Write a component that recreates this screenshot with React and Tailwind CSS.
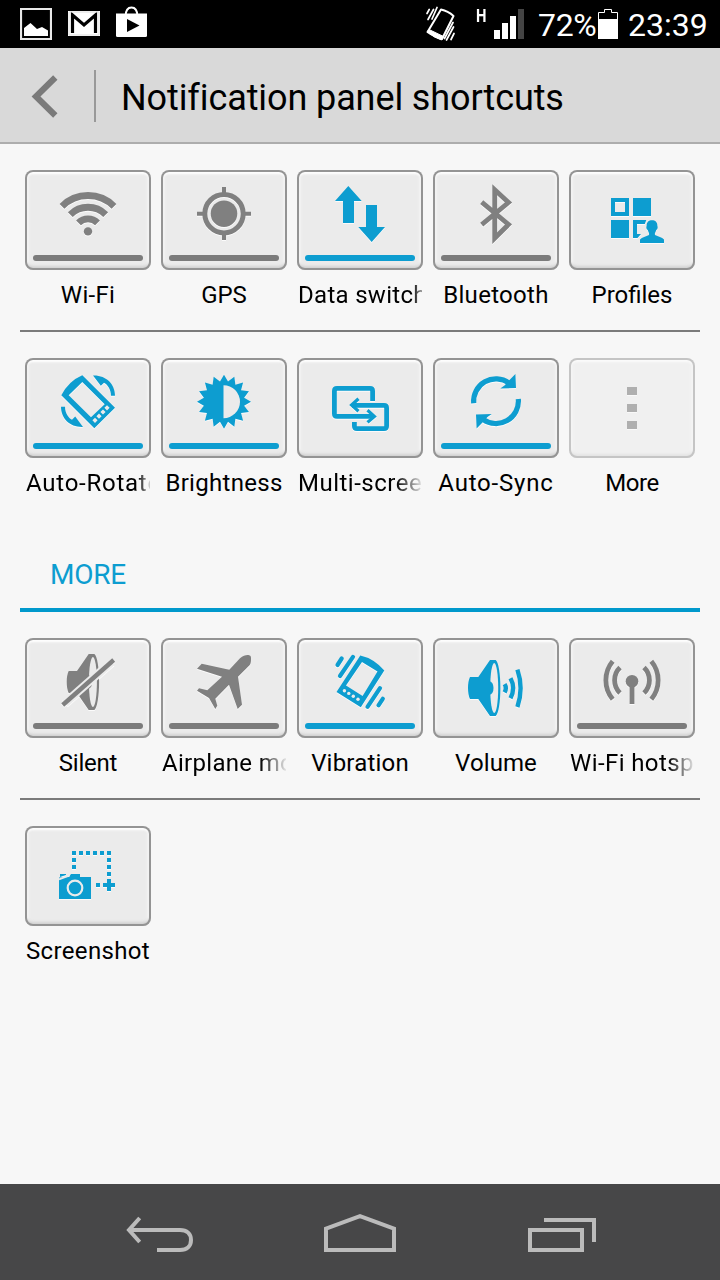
import React from 'react';
import clsx from 'clsx';

const BLUE = '#0d9dd0';
const GRAY = '#808080';
const TILE = '#ebebeb';

const sunPoints = Array.from({ length: 32 }, (_, i) => {
  const r = i % 2 === 0 ? 27 : 20.5;
  const a = (i * Math.PI) / 16;
  return `${(63 + r * Math.sin(a)).toFixed(2)},${(43.7 - r * Math.cos(a)).toFixed(2)}`;
}).join(' ');

const Speaker = () => (
  <>
    <path d="M37 39H45.3L57 22H62.7C65.5 24 67.4 36 67.4 50S65.5 76 62.7 78H57L45.3 61H37Q35 57 35 50T37 39Z" fill="currentColor" />
    <ellipse cx="61.2" cy="50" rx="4" ry="25" fill={TILE} />
    <path d="M56 43Q60.5 44 60.5 50T56 57Z" fill="currentColor" />
  </>
);

const RotateArrow = () => (
  <path d="M68 17.5C81 17 90 26 90 37.7H86C86 31 82.5 26.5 79 24.7L75.8 27.8Z" fill="currentColor" />
);

const SyncArrow = () => (
  <>
    <path d="M40.7 45.3A22.4 22.4 0 0 1 76 25" fill="none" stroke="currentColor" strokeWidth="5.2" />
    <path d="M82.4 16L83 30L67.3 30.5L71.5 27.5L77 21.5Z" fill="currentColor" />
  </>
);

const icons = {
  wifi: (
    <>
      <path
        d="M37 36.3A36.7 36.7 0 0 1 89 36.3M45.3 44.6A25 25 0 0 1 80.7 44.6M53.5 52.8A13.4 13.4 0 0 1 72.5 52.8"
        fill="none" stroke="currentColor" strokeWidth="6.8"
      />
      <circle cx="63" cy="61.4" r="4.2" fill="currentColor" />
    </>
  ),
  gps: (
    <>
      <circle cx="63" cy="43.7" r="19.2" fill="none" stroke="currentColor" strokeWidth="5" />
      <circle cx="63" cy="43.7" r="13.3" fill="currentColor" />
      <path d="M63 17V24M63 64V70M36 43.7H43M83 43.7H90" stroke="currentColor" strokeWidth="4" />
    </>
  ),
  data: (
    <path
      d="M51.3 16L64.7 31H57V53H46V31H38ZM69 35H80V57H88L74.7 72L61.3 57H69Z"
      fill="currentColor"
    />
  ),
  bluetooth: (
    <path
      d="M48.7 32.2L75.5 54.5L61.7 68.2V19.8L75.5 32.5L48.7 54.7"
      fill="none" stroke="currentColor" strokeWidth="4.8"
    />
  ),
  profiles: (
    <>
      <path d="M42 28H60V46H42ZM46 32V42H56V32Z" fill="currentColor" fillRule="evenodd" />
      <path d="M64 28H82V46H64ZM42 50H60V68H42Z" fill="currentColor" />
      <path d="M64 50H77.3L75.8 54H68V64H72L68.5 68H64Z" fill="currentColor" />
      <path
        d="M71 73V69.5C73 67.3 77 66.3 80 65C80.6 63.5 79.4 62 78.7 60C77.3 59 77 57.5 77.6 56C77.6 52 79.8 50.3 83 50.3S88.4 52 88.4 56C89 57.5 88.7 59 87.3 60C86.6 62 85.4 63.5 86 65C89 66.3 93 67.3 95 69.5V73Z"
        fill="currentColor"
      />
    </>
  ),
  rotate: (
    <>
      <path
        d="M57.3 17.3L90 49.7L69.3 70.3L36.3 37.3Q43.8 23 57.3 17.3ZM57.3 24L43.7 37.2L66 59.3L79.7 46.3Z"
        fill="currentColor" fillRule="evenodd"
      />
      <path d="M70 59.7L72.6 62.3L70 65L67.4 62.3ZM74 55.5L76.6 58.2L74 60.8L71.4 58.2ZM78 51.4L80.6 54L78 56.6L75.4 54ZM82 47.2L84.6 49.8L82 52.4L79.4 49.8Z" fill={TILE} />
      <RotateArrow />
      <g transform="rotate(180 63 43.2)"><RotateArrow /></g>
    </>
  ),
  brightness: (
    <>
      <polygon points={sunPoints} fill="currentColor" />
      <path d="M62.5 27.2A16.5 16.5 0 0 1 62.5 60.2Z" fill={TILE} />
    </>
  ),
  multiscreen: (
    <>
      <path
        d="M75.6 43V33Q75.6 30.4 73 30.4H40Q37.4 30.4 37.4 33V55.8Q37.4 58.4 40 58.4H77M55 47.3H87Q89.6 47.3 89.6 50V68Q89.6 70.6 87 70.6H60Q57.4 70.6 57.4 68V64"
        fill="none" stroke="currentColor" strokeWidth="4.8"
      />
      <path d="M61.5 40.8L54.6 47.1L61.5 53.2M70.5 52.2L77.4 58.4L70.5 64.4" fill="none" stroke="currentColor" strokeWidth="3.2" />
    </>
  ),
  sync: (
    <>
      <SyncArrow />
      <g transform="rotate(180 63 43.2)"><SyncArrow /></g>
    </>
  ),
  more: <path d="M58 29H68V37H58ZM58 46H68V54H58ZM58 63H68V71H58Z" fill="currentColor" />,
  silent: (
    <>
      <g transform="translate(6.7 -6)"><Speaker /></g>
      <path d="M40 65L86.5 24" stroke={TILE} strokeWidth="8.5" />
      <path d="M37.7 67L88.7 22" stroke="currentColor" strokeWidth="4.4" />
    </>
  ),
  airplane: (
    <path
      d="M68.3 31.7L79 20.3C82 17.5 85 16.8 87.5 17C89.5 17.3 90.2 18.5 90 20.5C90 23.5 90 25.5 88.5 27.3L77 38.7L81 66.7L76.7 71L68 46.7L54.3 60.7L56.3 67.7L54.3 71L48 60L36 52.7L38 50.3L46.3 52.3L61 38.7L36 30.7L40.7 25.7Z"
      fill="currentColor"
    />
  ),
  vibration: (
    <>
      <path
        d="M63.3 17.5Q77 20.5 87.3 32.5L63.8 69.2L39.5 54ZM65 24L49 47.5L65.6 58L80.5 33.5Z"
        fill="currentColor" fillRule="evenodd"
      />
      <g fill={TILE}>
        <circle cx="47.4" cy="52.7" r="1.7" />
        <circle cx="51.8" cy="55.4" r="1.7" />
        <circle cx="56.3" cy="58.3" r="1.7" />
        <circle cx="61" cy="61.3" r="1.7" />
      </g>
      <path
        d="M44.7 20.5L40.5 27M56 18.9L43 38M83 50.2L70.5 68.8M85.8 60.8L81.5 67.3"
        stroke="currentColor" strokeWidth="4.2" strokeLinecap="round"
      />
    </>
  ),
  volume: (
    <>
      <Speaker />
      <path
        d="M71.6 46.2Q74 50 71.6 54.4M77.5 40.2Q82.8 50 77.5 60.2M84.4 31.6Q90.8 50 84.4 69"
        fill="none" stroke="currentColor" strokeWidth="4.4"
      />
    </>
  ),
  hotspot: (
    <>
      <circle cx="63" cy="43.3" r="6.3" fill="currentColor" />
      <path
        d="M63 43V66M43.7 23.2A29.8 29.8 0 0 0 43.7 61.2M51 29.5A17.7 17.7 0 0 0 51 55M82.3 23.2A29.8 29.8 0 0 1 82.3 61.2M75 29.5A17.7 17.7 0 0 1 75 55"
        fill="none" stroke="currentColor" strokeWidth="4.8"
      />
    </>
  ),
  screenshot: (
    <>
      <path d="M47 27H87" stroke="currentColor" strokeWidth="4" strokeDasharray="4 3" />
      <path d="M49 32V44M84 32V51" stroke="currentColor" strokeWidth="4" strokeDasharray="4 3" />
      <path d="M71 59H75M78 59H90M84 53V65" stroke="currentColor" strokeWidth="4" />
      <path d="M34 51.5L44 51L46 48H55V51H66V73H34ZM35 48H41V49L35 51Z" fill="currentColor" />
      <path d="M34 53.4L44.5 49.4" stroke={TILE} strokeWidth="1.8" />
      <circle cx="50" cy="62" r="7.3" fill="none" stroke={TILE} strokeWidth="2.2" />
    </>
  ),
};

const fadeShort = '[mask-image:linear-gradient(to_right,#000_114px,transparent_130px)]';
const fadeMid = '[mask-image:linear-gradient(to_right,#000_112px,transparent_126px)]';
const fadeLong = '[mask-image:linear-gradient(to_right,#000_98px,transparent_126px)]';

const rows = [
  [
    { icon: 'wifi', label: 'Wi-Fi', bar: true },
    { icon: 'gps', label: 'GPS', bar: true, text: 'tracking-normal' },
    { icon: 'data', label: 'Data switch', bar: true, on: true, text: clsx('tracking-[0.3px]', fadeShort) },
    { icon: 'bluetooth', label: 'Bluetooth', bar: true },
    { icon: 'profiles', label: 'Profiles', on: true, text: 'tracking-normal' },
  ],
  [
    { icon: 'rotate', label: 'Auto-Rotate', bar: true, on: true, text: clsx('tracking-[0.75px]', fadeMid) },
    { icon: 'brightness', label: 'Brightness', bar: true, on: true },
    { icon: 'multiscreen', label: 'Multi-screen', on: true, text: clsx('tracking-[0.5px]', fadeLong) },
    { icon: 'sync', label: 'Auto-Sync', bar: true, on: true, text: 'tracking-[0.8px]' },
    { icon: 'more', label: 'More', disabled: true, text: 'tracking-[-0.4px]' },
  ],
  [
    { icon: 'silent', label: 'Silent', bar: true, text: 'tracking-[-0.2px]' },
    { icon: 'airplane', label: 'Airplane mode', bar: true, text: clsx('tracking-[0.3px]', fadeLong) },
    { icon: 'vibration', label: 'Vibration', bar: true, on: true, text: 'tracking-[0.2px]' },
    { icon: 'volume', label: 'Volume', on: true, text: 'tracking-[0.1px]' },
    { icon: 'hotspot', label: 'Wi-Fi hotspot', bar: true, text: clsx('tracking-[0.4px]', fadeLong) },
  ],
  [{ icon: 'screenshot', label: 'Screenshot', on: true, text: 'tracking-[0.35px]' }],
];

const Shortcut = ({ icon, label, bar, on, disabled, text = 'tracking-[0.3px]' }) => (
  <div className="flex flex-col items-center">
    <button
      className={clsx(
        'flex h-[100px] w-[126px] flex-col rounded-[8px] bg-[#ebebeb] shadow-[inset_0_0_0_2px_#949494,inset_0_4px_2px_#fdfdfd,inset_0_-5px_3px_-1px_#cfcfcf,inset_0_0_2px_4px_#f3f3f3]',
        disabled && 'opacity-50'
      )}
    >
      <svg
        viewBox="0 0 126 85"
        className="h-[85px] w-[126px] drop-shadow-[0_1px_0_#fbfbfb]"
        style={{ color: disabled ? '#6a6a6a' : on ? BLUE : GRAY }}
      >
        {icons[icon]}
      </svg>
      {bar && (
        <span className={clsx('mx-2 h-1.5 w-[110px] rounded-full', on ? 'bg-[#0d9dd0]' : 'bg-[#7b7b7b]')}></span>
      )}
    </button>
    <span className={clsx('mt-[9px] h-8 w-[124px] overflow-hidden text-center text-2xl whitespace-nowrap text-black', text)}>
      {label}
    </span>
  </div>
);

const ShortcutRow = ({ items, className }) => (
  <div className={clsx('grid grid-cols-5 pt-[26px]', className)}>
    {items.map((item) => <Shortcut key={item.icon} {...item} />)}
  </div>
);

const StatusBar = () => (
  <div className="flex h-12 items-center justify-between bg-black pr-[11px] pl-5 text-white">
    <div className="flex items-center gap-4">
      <svg viewBox="0 0 32 32" className="h-8 w-8">
        <path d="M1 1H31V31H1Z" fill="none" stroke="#e8e8e8" strokeWidth="2.2" />
        <path d="M4 28V20L10.5 15L17 21L22 19L28 22.5V28Z" fill="#fff" />
      </svg>
      <svg viewBox="0 0 32 32" className="h-8 w-8">
        <path d="M0 3H32V28H0Z" fill="#fff" />
        <path d="M4.5 25V7L16 17L27.5 7V25" fill="none" stroke="#000" strokeWidth="3.2" />
        <path d="M1 4H31V27H1Z" fill="none" stroke="#ddd" strokeWidth="1" />
      </svg>
      <svg viewBox="0 0 32 32" className="h-8 w-8 overflow-visible">
        <path d="M9.7 8Q9.7 -0.5 15.5 -0.5T21.3 8" fill="none" stroke="#fff" strokeWidth="2" />
        <path d="M0 5.5H31V27.5Q31 29 29.5 29H1.5Q0 29 0 27.5Z" fill="#fff" />
        <path d="M11 11L23.5 17.5L11 24Z" fill="#000" />
      </svg>
    </div>
    <div className="flex items-center">
      <svg viewBox="0 0 30 36" className="mr-5 h-9 w-[30px]" fill="none" stroke="#fff">
        <path d="M15 3.5Q22 5 27.5 10L16 33Q7 30 1.5 26Z" strokeWidth="2" strokeLinejoin="round" />
        <path d="M1.5 25.5L3 23.5L17.5 30.5L15.5 34Q7 31.5 1.5 25.5Z" fill="#fff" strokeWidth="1" />
        <path d="M1 7.5L3.2 3.5M2 13.5L7.5 3.5M6 13L11 1.5M28 27.5L25 33.5M27.5 21L20.5 34M27 16.5L18.5 32.5" strokeWidth="1.7" strokeLinecap="round" />
      </svg>
      <span className="mr-[7px] h-8 w-[11px] origin-left scale-x-[0.82] text-[18px] leading-4 font-bold">H</span>
      <svg viewBox="0 0 30 30" className="mr-[14px] h-[30px] w-[30px]">
        <path d="M0 21H6V30H0ZM8 14H14V30H8ZM16 7H22V30H16Z" fill="#fff" />
        <path d="M24 0H30V30H24Z" fill="#444" />
      </svg>
      <span className="w-[60px] pt-0.5 text-[32px] leading-none tracking-[-0.3px]">72%</span>
      <svg viewBox="0 0 20 30" className="mr-[10px] h-[30px] w-5">
        <path d="M0.5 29.5V3.5H6.5V0.5H13.5V3.5H19.5V29.5Z" fill="none" stroke="#fff" />
        <path d="M0 10H20V30H0Z" fill="#fff" />
      </svg>
      <span className="w-[81px] pt-0.5 text-[32px] leading-none">23:39</span>
    </div>
  </div>
);

const NavBar = () => (
  <div className="flex h-24 items-center justify-center gap-[120px] bg-[#474748]">
    {[
      'M19.7 10L9 22L19.7 34M9 22H60C67 22 71 26 71 32S67 42 60 42H37',
      'M6 42V20.6L40 8.2L74 20.6V42Z',
      'M10 22H62V42H10ZM24 12H74V34',
    ].map((d) => (
      <svg key={d} viewBox="0 0 80 48" className="h-12 w-20" fill="none" stroke="#bbb" strokeWidth="4">
        <path d={d} />
      </svg>
    ))}
  </div>
);

const App = () => (
  <div className="flex h-[1280px] w-[720px] flex-col overflow-hidden bg-[#f7f7f7] font-['Roboto',sans-serif]">
    <StatusBar />
    <header className="flex h-24 items-center border-b-2 border-[#adadad] bg-[#d9d9d9] pt-0.5">
      <svg viewBox="0 0 30 44" className="ml-[30px] h-11 w-[30px]">
        <path d="M25.3 3.5L6 22.5L25.3 41.5" fill="none" stroke="#7a7a7a" strokeWidth="6.2" />
      </svg>
      <div className="ml-[34px] h-[52px] w-0.5 bg-[#999]"></div>
      <h1 className="ml-[25px] pt-1 text-[36px] tracking-[-0.1px] text-black">Notification panel shortcuts</h1>
    </header>

    <main className="flex-1 px-5">
      <ShortcutRow items={rows[0]} className="h-[188px] border-b-2 border-[#7b7b7b]" />
      <ShortcutRow items={rows[1]} className="h-[204px]" />
      <h2 className="h-[76px] border-b-4 border-[#0099cc] pt-[18px] pl-[30px] text-[28px] tracking-[-0.2px] text-[#0d9dd0]">MORE</h2>
      <ShortcutRow items={rows[2]} className="h-[188px] border-b-2 border-[#7b7b7b]" />
      <ShortcutRow items={rows[3]} />
    </main>

    <NavBar />
  </div>
);

export default App;
